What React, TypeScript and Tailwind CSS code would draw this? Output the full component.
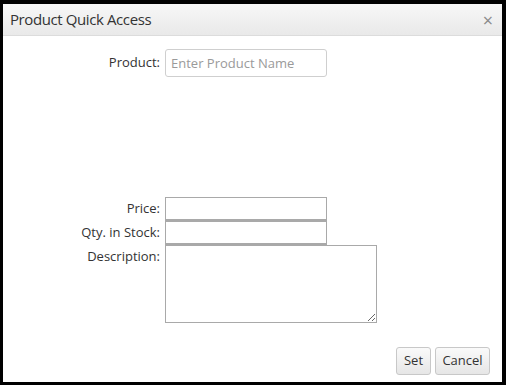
const font = { fontFamily: '"Open Sans", "Liberation Sans", sans-serif' };

const App = () => {
  return (
    <div className="flex h-[385px] w-[506px] bg-black pt-[4px] pr-[4px] pb-[3px] pl-[3px]" style={font}>
      <div className="flex flex-1 flex-col bg-white">
        {/* header */}
        <div className="flex h-[32px] items-center justify-between border-b border-[#dcdcdc] bg-gradient-to-b from-[#f7f7f7] to-[#e9e9e9] pr-[9px] pl-[7px]">
          <span className="text-[15px] tracking-[-0.4px] text-[#333]">Product Quick Access</span>
          <span className="text-[18px] leading-none text-[#8a8a8a]">×</span>
        </div>

        {/* product */}
        <div className="mt-[13px] grid grid-cols-[157px_1fr] items-center gap-x-[5px]">
          <label className="text-right text-[13px] text-[#333]">Product:</label>
          <input
            placeholder="Enter Product Name"
            className="h-[28px] w-[162px] rounded-[3px] border border-[#cfcfcf] px-[5px] text-[13px] text-[#333] outline-none placeholder:text-[#9a9a9a]"
          />
        </div>

        {/* details */}
        <div className="mt-[120px] grid grid-cols-[157px_1fr] gap-x-[5px]">
          <label className="flex h-[24px] items-center justify-end text-[13px] text-[#333]">Price:</label>
          <input className="h-[24px] w-[162px] border border-b-2 border-[#a9a9a9] outline-none" />
          <label className="flex h-[24px] items-center justify-end text-[13px] text-[#333]">Qty. in Stock:</label>
          <input className="h-[24px] w-[162px] border border-b-2 border-[#a9a9a9] outline-none" />
          <label className="flex h-[24px] items-center justify-end text-[13px] text-[#333]">Description:</label>
          <textarea className="h-[78px] w-[212px] border border-[#a9a9a9] outline-none" />
        </div>

        {/* buttons */}
        <div className="mt-auto mb-[7px] flex justify-end gap-[4px] pr-[12px]">
          <button className="h-[28px] w-[35px] rounded-[3px] border border-[#c8c8c8] bg-gradient-to-b from-[#fafafa] to-[#e6e6e6] text-[13px] text-[#333]">Set</button>
          <button className="h-[28px] w-[55px] rounded-[3px] border border-[#c8c8c8] bg-gradient-to-b from-[#fafafa] to-[#e6e6e6] text-[13px] text-[#333]">Cancel</button>
        </div>
      </div>
    </div>
  );
};

export default App;
